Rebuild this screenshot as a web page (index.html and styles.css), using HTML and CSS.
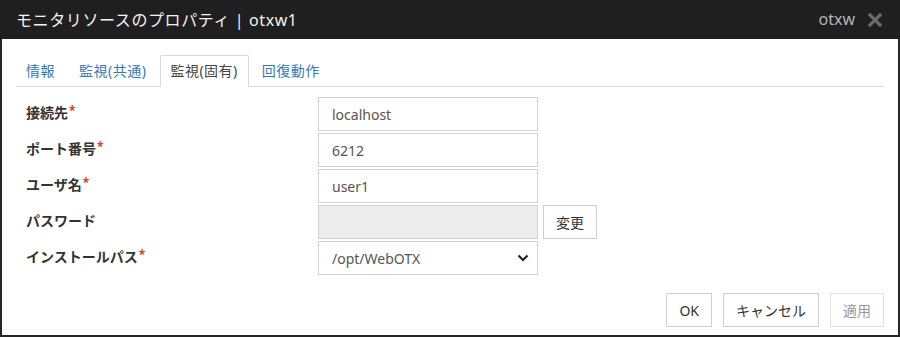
FILE: index.html
```html
<!DOCTYPE html>
<html lang="ja">
<head>
  <meta charset="UTF-8">
  <title>モニタリソースのプロパティ</title>
  <link rel="stylesheet" href="styles.css">
</head>
<body>
  <div class="dialog">
    <header class="dialog-title">
      <span class="title-text">モニタリソースのプロパティ | otxw1</span>
      <div class="title-right">
        <span class="server">otxw</span>
        <svg class="close" width="14" height="14" viewBox="0 0 14 14">
          <path d="M2 2 L12 12 M12 2 L2 12" stroke="#6b6b6b" stroke-width="3.2" stroke-linecap="square"/>
        </svg>
      </div>
    </header>

    <div class="dialog-body">
      <ul class="tabs">
        <li class="tab">情報</li>
        <li class="tab">監視(共通)</li>
        <li class="tab active">監視(固有)</li>
        <li class="tab">回復動作</li>
      </ul>

      <div class="form">
        <label class="label">接続先<span class="req">*</span></label>
        <input class="field" type="text" value="localhost">
        <span></span>

        <label class="label">ポート番号<span class="req">*</span></label>
        <input class="field" type="text" value="6212">
        <span></span>

        <label class="label">ユーザ名<span class="req">*</span></label>
        <input class="field" type="text" value="user1">
        <span></span>

        <label class="label">パスワード</label>
        <input class="field" type="password" disabled>
        <button class="btn btn-change">変更</button>

        <label class="label">インストールパス<span class="req">*</span></label>
        <div class="select-wrap">
          <select class="field select">
            <option>/opt/WebOTX</option>
          </select>
          <svg class="chevron" width="12" height="8" viewBox="0 0 12 8">
            <path d="M1.5 1.5 L6 6 L10.5 1.5" fill="none" stroke="#222" stroke-width="2.2"/>
          </svg>
        </div>
        <span></span>
      </div>

      <div class="footer">
        <button class="btn">OK</button>
        <button class="btn">キャンセル</button>
        <button class="btn" disabled>適用</button>
      </div>
    </div>
  </div>
</body>
</html>
```

FILE: styles.css
```css
* {
  box-sizing: border-box;
  font-family: 'Noto Sans', 'Noto Sans CJK JP', sans-serif;
}

body {
  margin: 0;
  padding: 0;
  background: #1f1f1f;
}

.dialog {
  width: 900px;
  height: 337px;
  background: #fff;
  border: 2px solid #262626;
  border-top: none;
}

.dialog-title {
  height: 39px;
  margin: 0 -2px;
  padding: 0 18px 0 16px;
  background: #1f1f1f;
  display: flex;
  align-items: center;
  justify-content: space-between;
}

.title-text {
  color: #f2f2f2;
  font-size: 16px;
  letter-spacing: 0.6px;
  padding-bottom: 1px;
}

.title-right {
  display: flex;
  align-items: center;
  gap: 13px;
}

.server {
  color: #b5b5b5;
  font-size: 16px;
  padding-bottom: 2px;
}

.close {
  display: block;
}

.dialog-body {
  padding: 16px 14px 0;
}

.tabs {
  list-style: none;
  margin: 0;
  padding: 0;
  display: flex;
  height: 32px;
  border-bottom: 1px solid #dcdcdc;
}

.tab {
  height: 32px;
  padding: 0 10px 0 9px;
  margin-right: 3px;
  border: 1px solid transparent;
  border-bottom: none;
  color: #3579b8;
  font-size: 14px;
  letter-spacing: 0.5px;
  line-height: 30px;
}

.tab.active {
  color: #444;
  background: #fff;
  border-color: #d8d8d8;
  border-radius: 2px 2px 0 0;
}

.form {
  display: grid;
  grid-template-columns: 297px 220px auto;
  row-gap: 2px;
  column-gap: 5px;
  margin-top: 10px;
  align-items: center;
}

.label {
  padding-left: 10px;
  font-size: 14px;
  font-weight: bold;
  color: #333;
  margin-top: -4px;
}

.req {
  color: #d0452b;
  font-size: 12px;
  vertical-align: 3px;
  margin-left: 1px;
}

.field {
  width: 220px;
  height: 34px;
  border: 1px solid #d2d2d2;
  padding: 0 13px;
  font-size: 14px;
  color: #555;
  background: #fff;
  outline: none;
  border-radius: 0;
}

.field:disabled {
  background: #ededed;
}

.select-wrap {
  position: relative;
  width: 220px;
}

.select {
  appearance: none;
  -webkit-appearance: none;
  display: block;
}

.chevron {
  position: absolute;
  right: 9px;
  top: 13px;
  pointer-events: none;
}

.btn {
  height: 34px;
  padding: 0 12px;
  border: 1px solid #cfcfcf;
  background: #fff;
  color: #333;
  font-size: 14px;
  border-radius: 0;
}

.btn-change {
  justify-self: start;
  width: 54px;
  padding: 0;
}

.btn:disabled {
  color: #999;
  border-color: #e0e0e0;
}

.footer {
  display: flex;
  justify-content: flex-end;
  gap: 11px;
  margin-top: 18px;
}
```
